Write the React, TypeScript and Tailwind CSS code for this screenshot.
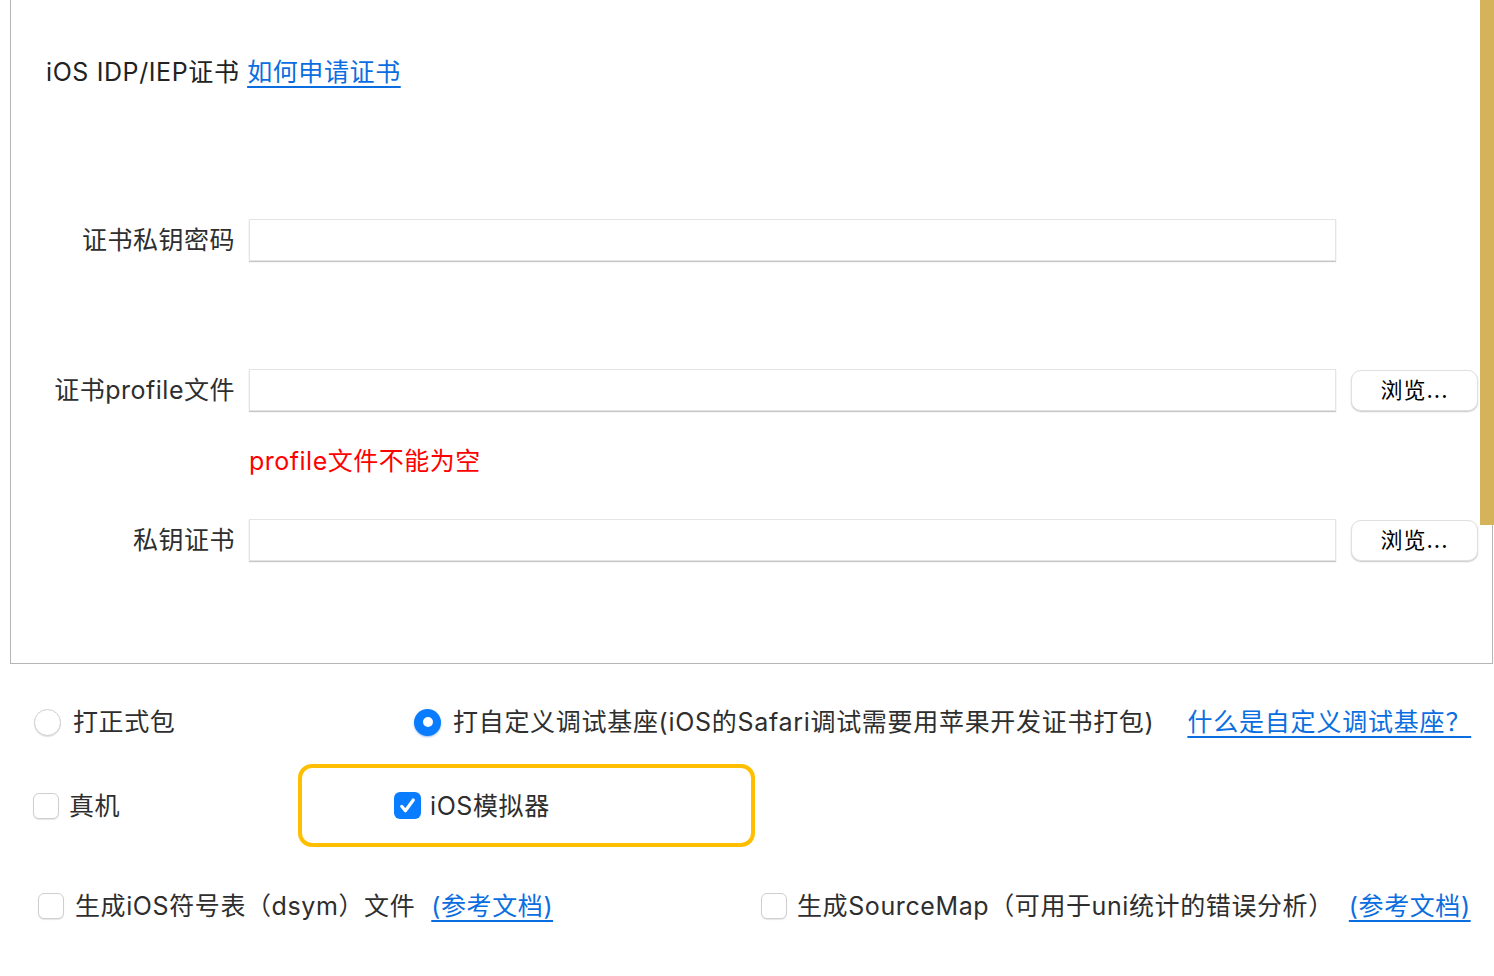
import React from 'react';

const FONT = { fontFamily: 'Inter, "Noto Sans CJK SC", sans-serif' };

const Field: React.FC<{ label: string; browse?: boolean }> = ({ label, browse }) => (
  <div className="flex items-center">
    <div className="w-[224px] text-right text-[25px] leading-[32px] tracking-[0.5px] text-[#2e2e2e]">{label}</div>
    <div className="ml-[14px] w-[1087px] h-[42px] bg-white border border-[#e4e4e4] shadow-[0_1px_1px_rgba(0,0,0,0.22)]" />
    {browse && (
      <button className="ml-[15px] w-[127px] h-[41px] bg-white rounded-[10px] border border-[#e0e0e0] shadow-[0_1px_1.5px_rgba(0,0,0,0.22)] text-[22px] leading-none text-black tracking-[1px]">
        浏览...
      </button>
    )}
  </div>
);

const Radio: React.FC<{ checked?: boolean }> = ({ checked }) =>
  checked ? (
    <span className="flex items-center justify-center w-[27px] h-[27px] rounded-full bg-[#0a7cff] shadow-[0_1px_2px_rgba(0,90,220,0.4)]">
      <span className="w-[10px] h-[10px] rounded-full bg-white" />
    </span>
  ) : (
    <span className="block w-[27px] h-[27px] rounded-full bg-white border border-[#cfcfcf] shadow-[0_1px_1px_rgba(0,0,0,0.12)]" />
  );

const Checkbox: React.FC<{ checked?: boolean }> = ({ checked }) =>
  checked ? (
    <span className="flex items-center justify-center w-[27px] h-[27px] rounded-[6px] bg-[#0a7cff]">
      <svg width="19" height="19" viewBox="0 0 18 18" fill="none">
        <path d="M3.5 9.8l3.5 4.2L14.5 3.8" stroke="white" strokeWidth="3" strokeLinecap="round" strokeLinejoin="round" />
      </svg>
    </span>
  ) : (
    <span className="block w-[26px] h-[26px] rounded-[6px] bg-white border border-[#cfcfcf] shadow-[0_1px_1px_rgba(0,0,0,0.1)]" />
  );

const Link: React.FC<{ children: React.ReactNode; className?: string }> = ({ children, className }) => (
  <a className={`text-[#0a6ee0] underline decoration-[2px] underline-offset-[5px] ${className || ''}`}>{children}</a>
);

export default function App() {
  return (
    <div className="relative w-full h-[976px] bg-white overflow-hidden text-[#2e2e2e]" style={FONT}>
      <div className="relative ml-[10px] w-[1483px] h-[664px] border-l border-r border-b border-[#b5b5b5]">
        <div className="absolute top-0 right-[-2px] w-[14px] h-[525px] bg-[#d4b35a]" />

        <div className="pt-[56px] pl-[35px] text-[25px] leading-[32px] tracking-[0.6px] text-[#222]">
          iOS IDP/IEP证书 <Link>如何申请证书</Link>
        </div>

        <div className="mt-[131px]">
          <Field label="证书私钥密码" />
        </div>
        <div className="mt-[108px]">
          <Field label="证书profile文件" browse />
        </div>
        <div className="mt-[34px] pl-[238px] text-[25px] leading-[32px] tracking-[0.5px] text-[#ff0000]">
          profile文件不能为空
        </div>
        <div className="mt-[42px]">
          <Field label="私钥证书" browse />
        </div>
      </div>

      <div className="text-[25px] leading-[32px] tracking-[0.6px]">
        <div className="mt-[42px] pl-[34px] flex items-center h-[32px]">
          <div className="w-[380px] flex items-center gap-[12px]">
            <Radio />
            <span>打正式包</span>
          </div>
          <div className="flex items-center gap-[12px]">
            <Radio checked />
            <span className="tracking-[0.7px]">打自定义调试基座(iOS的Safari调试需要用苹果开发证书打包)</span>
          </div>
          <Link className="ml-[33px] tracking-[0.8px]">什么是自定义调试基座？</Link>
        </div>

        <div className="mt-[26px] pl-[33px] flex items-center">
          <div className="w-[265px] flex items-center gap-[10px]">
            <Checkbox />
            <span>真机</span>
          </div>
          <div className="w-[457px] h-[83px] rounded-[14px] border-[4px] border-[#ffbf00] pl-[92px] flex items-center gap-[9px]">
            <Checkbox checked />
            <span>iOS模拟器</span>
          </div>
        </div>

        <div className="mt-[43px] pl-[38px] flex items-center h-[32px]">
          <div className="w-[723px] flex items-center">
            <Checkbox />
            <span className="ml-[11px]">生成iOS符号表（dsym）文件</span>
            <Link className="ml-[16px]">(参考文档)</Link>
          </div>
          <div className="flex items-center">
            <Checkbox />
            <span className="ml-[10px]">生成SourceMap（可用于uni统计的错误分析）</span>
            <Link className="ml-[15px]">(参考文档)</Link>
          </div>
        </div>
      </div>
    </div>
  );
}
